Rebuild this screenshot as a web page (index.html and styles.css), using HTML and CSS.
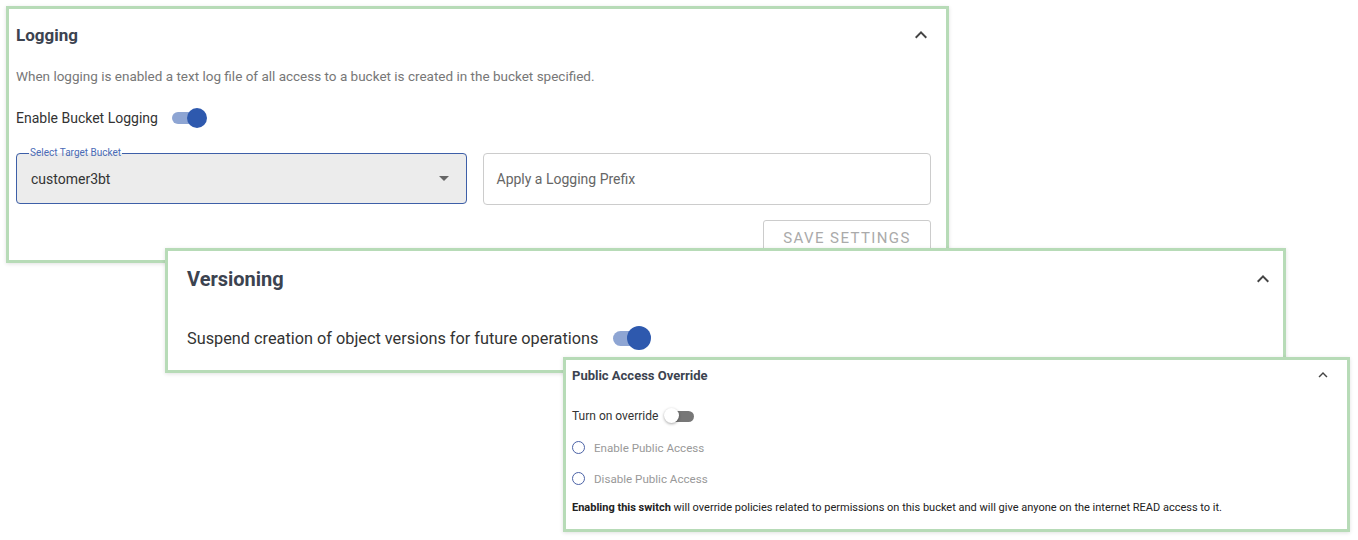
FILE: index.html
```html
<!DOCTYPE html>
<html lang="en">
<head>
    <meta charset="UTF-8">
    <meta name="viewport" content="width=device-width, initial-scale=1.0">
    <title>Bucket settings</title>
    <link rel="stylesheet" href="styles.css">
</head>
<body>
    <div class="canvas">
        <!-- Logging panel -->
        <div class="card logging">
            <div class="card-header">
                <h2>Logging</h2>
                <svg class="chevron" viewBox="0 0 24 24"><path d="M7.4 15.4 12 10.8l4.6 4.6L18 14l-6-6-6 6z"/></svg>
            </div>
            <p class="description">When logging is enabled a text log file of all access to a bucket is created in the bucket specified.</p>
            <div class="switch-row">
                <span>Enable Bucket Logging</span>
                <span class="toggle on"><span class="thumb"></span></span>
            </div>
            <div class="fields">
                <fieldset class="select-box">
                    <legend>Select Target Bucket</legend>
                    <span class="value">customer3bt</span>
                    <span class="caret"></span>
                </fieldset>
                <div class="text-box">Apply a Logging Prefix</div>
            </div>
            <div class="actions">
                <button class="save-button">SAVE SETTINGS</button>
            </div>
        </div>

        <!-- Versioning panel -->
        <div class="card versioning">
            <div class="card-header">
                <h2>Versioning</h2>
                <svg class="chevron" viewBox="0 0 24 24"><path d="M7.4 15.4 12 10.8l4.6 4.6L18 14l-6-6-6 6z"/></svg>
            </div>
            <div class="switch-row">
                <span>Suspend creation of object versions for future operations</span>
                <span class="toggle on"><span class="thumb"></span></span>
            </div>
        </div>

        <!-- Public access panel -->
        <div class="card public-access">
            <div class="card-header">
                <h2>Public Access Override</h2>
                <svg class="chevron" viewBox="0 0 24 24"><path d="M7.4 15.4 12 10.8l4.6 4.6L18 14l-6-6-6 6z"/></svg>
            </div>
            <div class="switch-row">
                <span>Turn on override</span>
                <span class="toggle off"><span class="thumb"></span></span>
            </div>
            <div class="radio-row"><span class="radio"></span>Enable Public Access</div>
            <div class="radio-row"><span class="radio"></span>Disable Public Access</div>
            <p class="note"><b>Enabling this switch</b> will override policies related to permissions on this bucket and will give anyone on the internet READ access to it.</p>
        </div>
    </div>
</body>
</html>
```

FILE: styles.css
```css
body {
    margin: 0;
    background-color: #fff;
    font-family: Roboto, "Liberation Sans", sans-serif;
    color: #333;
}
.canvas {
    position: relative;
    width: 1358px;
    height: 540px;
    overflow: hidden;
}
.card {
    position: absolute;
    box-sizing: border-box;
    background-color: #fff;
    border: 3px solid #b7dbb7;
    box-shadow: 0 1px 4px rgba(0,0,0,0.12);
    display: flex;
    flex-direction: column;
}
.card-header {
    display: flex;
    align-items: center;
    justify-content: space-between;
}
.card-header h2 {
    margin: 0;
    font-weight: 700;
    color: #3c4350;
}
.chevron {
    fill: #444;
}
.switch-row {
    display: flex;
    align-items: center;
}

/* toggles */
.toggle {
    position: relative;
    display: inline-block;
    border-radius: 10px;
}
.toggle .thumb {
    position: absolute;
    top: 50%;
    border-radius: 50%;
}
.toggle.on {
    background-color: #8ea5d3;
}
.toggle.on .thumb {
    right: -4px;
    background-color: #2e59ae;
}

/* Logging */
.logging {
    left: 6px;
    top: 6px;
    width: 943px;
    height: 257px;
    padding: 0 15px 0 7px;
    z-index: 1;
}
.logging .card-header {
    height: 52px;
}
.logging h2 {
    font-size: 17px;
}
.logging .chevron {
    width: 24px;
    height: 24px;
    margin-right: -2px;
}
.logging .description {
    margin: 6px 0 0;
    font-size: 13.5px;
    line-height: 18px;
    color: #777;
}
.logging .switch-row {
    margin-top: 21px;
    height: 24px;
    font-size: 14px;
    gap: 14px;
}
.logging .toggle {
    width: 28px;
    height: 12px;
}
.logging .toggle .thumb {
    width: 20px;
    height: 20px;
    margin-top: -10px;
    right: -7px;
}
.fields {
    display: flex;
    gap: 16px;
    margin-top: 23px;
}
.select-box {
    position: relative;
    flex: 1;
    box-sizing: border-box;
    height: 57px;
    margin: -6px 0 0;
    padding: 0 14px;
    border: 1.5px solid #3d5fa8;
    border-radius: 4px;
    background-color: #ececec;
    display: flex;
    align-items: center;
    justify-content: space-between;
    min-width: 0;
}
.select-box legend {
    font-size: 10px;
    color: #4a6bb5;
    padding: 0 1px;
    margin-left: -2px;
    line-height: 12px;
}
.select-box .value {
    font-size: 14px;
    color: #333;
    margin-top: -4px;
}
.select-box .caret {
    width: 0;
    height: 0;
    border-left: 5px solid transparent;
    border-right: 5px solid transparent;
    border-top: 5px solid #666;
    margin: -6px 3px 0 0;
}
.text-box {
    flex: 1;
    box-sizing: border-box;
    height: 52px;
    padding: 0 13px;
    border: 1px solid #ccc;
    border-radius: 4px;
    font-size: 14px;
    color: #666;
    display: flex;
    align-items: center;
}
.actions {
    display: flex;
    justify-content: flex-end;
    margin-top: 15px;
}
.save-button {
    width: 168px;
    height: 36px;
    background-color: #fff;
    border: 1px solid #ccc;
    border-radius: 3px;
    font-family: Roboto, "Liberation Sans", sans-serif;
    font-size: 15px;
    letter-spacing: 1.4px;
    color: #aaa;
}

/* Versioning */
.versioning {
    left: 165px;
    top: 248px;
    width: 1121px;
    height: 125px;
    padding: 0 8px 0 19px;
    z-index: 2;
}
.versioning .card-header {
    height: 56px;
}
.versioning h2 {
    font-size: 20px;
}
.versioning .chevron {
    width: 24px;
    height: 24px;
}
.versioning .switch-row {
    margin-top: 17px;
    height: 28px;
    font-size: 16.3px;
    gap: 15px;
}
.versioning .toggle {
    width: 32px;
    height: 15px;
}
.versioning .toggle .thumb {
    width: 24px;
    height: 24px;
    margin-top: -12px;
    right: -6px;
}

/* Public access */
.public-access {
    left: 563px;
    top: 357px;
    width: 787px;
    height: 175px;
    padding: 0 15px 0 6px;
    z-index: 3;
}
.public-access .card-header {
    height: 30px;
}
.public-access h2 {
    font-size: 13px;
}
.public-access .chevron {
    width: 18px;
    height: 18px;
}
.public-access .switch-row {
    margin-top: 16px;
    height: 20px;
    font-size: 12px;
    gap: 6px;
}
.toggle.off {
    width: 24px;
    height: 11px;
    margin-left: 6px;
    background-color: #777;
}
.toggle.off .thumb {
    left: -6px;
    width: 15px;
    height: 15px;
    margin-top: -8px;
    background-color: #fff;
    box-shadow: 0 1px 3px rgba(0,0,0,0.35);
}
.radio-row {
    display: flex;
    align-items: center;
    gap: 9px;
    height: 31px;
    font-size: 11.6px;
    color: #999;
}
.radio {
    box-sizing: border-box;
    width: 13px;
    height: 13px;
    border: 1.5px solid #4b62a6;
    border-radius: 50%;
}
.public-access .switch-row + .radio-row {
    margin-top: 6px;
}
.note {
    margin: 7px 0 0;
    font-size: 11px;
    color: #222;
}
```
